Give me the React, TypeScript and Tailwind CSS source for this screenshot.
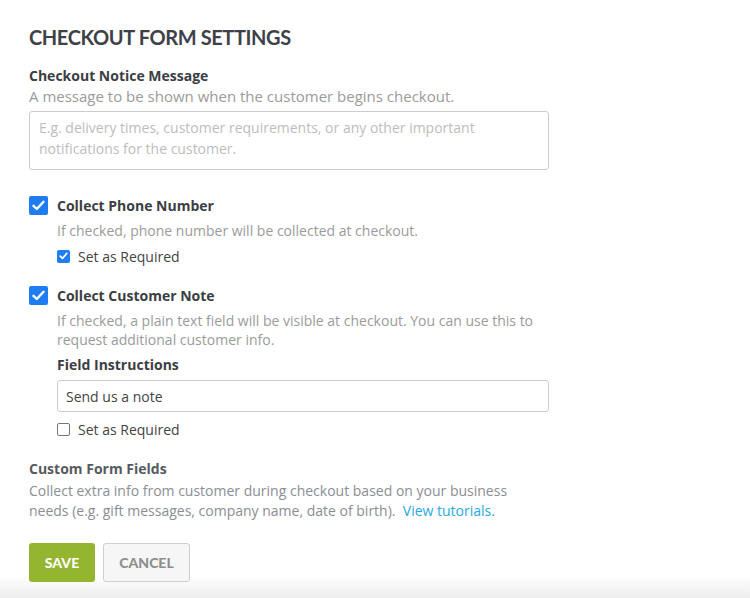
import React from "react";

function BigCheck() {
  return (
    <span className="flex h-[19px] w-[19px] shrink-0 items-center justify-center rounded-[2px] bg-[#1f7cf2]">
      <svg width="13" height="11" viewBox="0 0 13 11" fill="none">
        <path d="M1.5 5.8 L4.8 9 L11.5 1.8" stroke="white" strokeWidth="2.4" strokeLinecap="round" strokeLinejoin="round" />
      </svg>
    </span>
  );
}

function SmallCheck({ checked }: { checked: boolean }) {
  if (checked) {
    return (
      <span className="flex h-[13px] w-[13px] shrink-0 items-center justify-center rounded-[2px] bg-[#1f7cf2]">
        <svg width="9" height="8" viewBox="0 0 9 8" fill="none">
          <path d="M1.2 4.2 L3.5 6.4 L7.8 1.4" stroke="white" strokeWidth="1.7" strokeLinecap="round" strokeLinejoin="round" />
        </svg>
      </span>
    );
  }
  return <span className="block h-[13px] w-[13px] shrink-0 rounded-[2px] border border-[#767676] bg-white" />;
}

export default function App() {
  return (
    <div
      className="min-h-[598px] w-full bg-[linear-gradient(to_bottom,#ffffff_576px,#ededed_598px)] pl-[29px] pt-[23px] text-[14px] font-['Open_Sans',sans-serif]"
    >
      <h1 className="font-['Lato',sans-serif] text-[20px] font-bold leading-[28px] tracking-[-0.4px] text-[#3e4148]">
        CHECKOUT FORM SETTINGS
      </h1>

      <div className="mt-[14px] font-bold leading-[21px] text-[#3b3e44]">Checkout Notice Message</div>
      <div className="text-[15px] leading-[21px] text-[#9b9b9b]">A message to be shown when the customer begins checkout.</div>
      <textarea
        className="mt-[4px] block h-[59px] w-[520px] resize-none rounded-[3px] border border-[#cccccc] px-[9px] pt-[5px] text-[14px] leading-[21px] text-[#444] outline-none placeholder:text-[#bdbdbd]"
        placeholder={"E.g. delivery times, customer requirements, or any other important\nnotifications for the customer."}
      />

      <div className="mt-[26px] flex h-[19px] items-center gap-[9px]">
        <BigCheck />
        <span className="font-bold text-[#3b3e44]">Collect Phone Number</span>
      </div>
      <div className="ml-[28px] mt-[6px] leading-[20px] text-[#9b9b9b]">
        If checked, phone number will be collected at checkout.
      </div>
      <div className="ml-[28px] mt-[5px] flex h-[20px] items-center gap-[8px]">
        <SmallCheck checked />
        <span className="text-[#444]">Set as Required</span>
      </div>

      <div className="mt-[20px] flex h-[19px] items-center gap-[9px]">
        <BigCheck />
        <span className="font-bold text-[#3b3e44]">Collect Customer Note</span>
      </div>
      <div className="ml-[28px] mt-[6px] leading-[19px] text-[#9b9b9b]">
        If checked, a plain text field will be visible at checkout. You can use this to
        <br />
        request additional customer info.
      </div>
      <div className="ml-[28px] mt-[6px] font-bold leading-[20px] text-[#3b3e44]">Field Instructions</div>
      <div className="ml-[28px] mt-[5px] flex h-[32px] w-[492px] items-center rounded-[3px] border border-[#cccccc] px-[8px] text-[#444]">
        Send us a note
      </div>
      <div className="ml-[28px] mt-[7px] flex h-[20px] items-center gap-[8px]">
        <SmallCheck checked={false} />
        <span className="text-[#444]">Set as Required</span>
      </div>

      <div className="mt-[20px] font-bold leading-[20px] text-[#565a61]">Custom Form Fields</div>
      <div className="mt-[2px] leading-[20px] text-[#8a8e94]">
        Collect extra info from customer during checkout based on your business
        <br />
        needs (e.g. gift messages, company name, date of birth).&nbsp;{" "}
        <span className="text-[#2aa8e2]">View tutorials.</span>
      </div>

      <div className="mt-[22px] flex gap-[8px]">
        <button className="flex h-[39px] w-[66px] items-center justify-center rounded-[3px] bg-[#94b52f] font-['Lato',sans-serif] text-[14px] font-black text-white">
          SAVE
        </button>
        <button className="flex h-[39px] w-[87px] items-center justify-center rounded-[3px] border border-[#cfcfcf] bg-[#f6f6f6] font-['Lato',sans-serif] text-[14px] font-black text-[#8e8e8e]">
          CANCEL
        </button>
      </div>
    </div>
  );
}
